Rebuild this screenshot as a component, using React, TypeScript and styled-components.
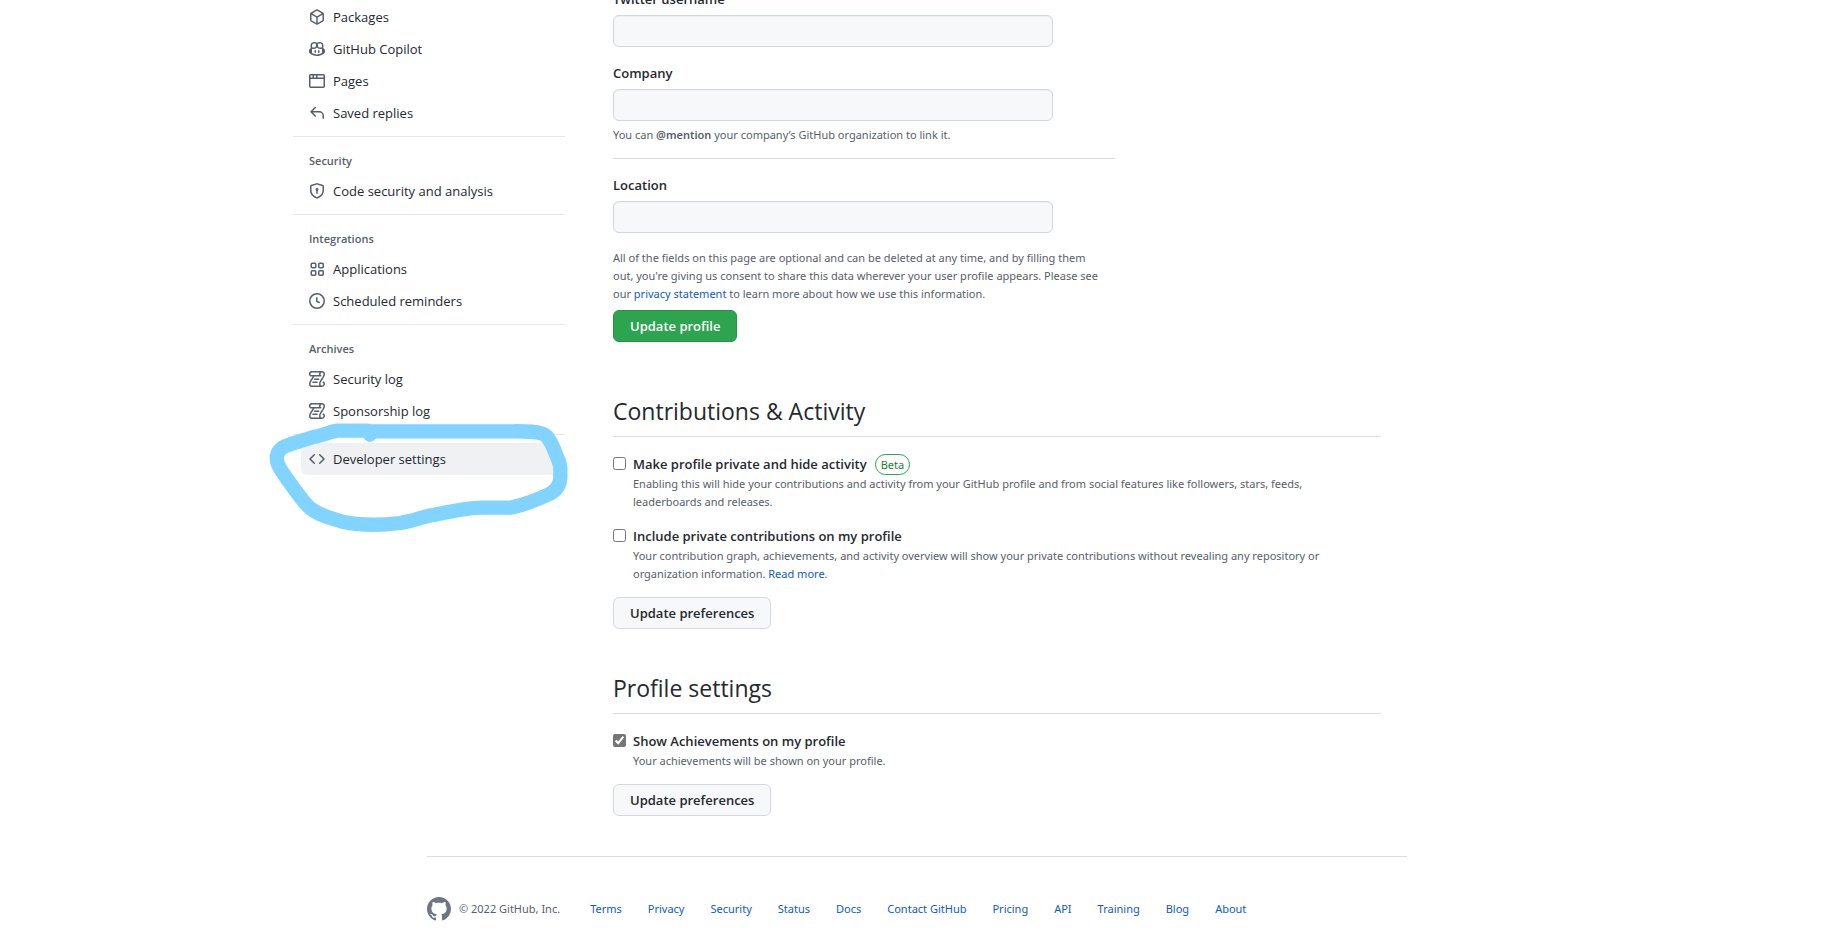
import React from "react";
import styled, { createGlobalStyle } from "styled-components";

const smallFont = `"Noto Sans", "Open Sans", sans-serif`;

const GlobalStyle = createGlobalStyle`
  *, *::before, *::after { box-sizing: border-box; }
  body {
    margin: 0;
    background: #ffffff;
    color: #24292f;
    font-family: "Open Sans", "Noto Sans", sans-serif;
    font-size: 13px;
    line-height: 21px;
    overflow-x: hidden;
  }
`;

const Page = styled.div`
  padding-right: 4px;
`;

const Container = styled.div`
  display: flex;
  align-items: flex-start;
  gap: 48px;
  max-width: 1280px;
  margin: 0 auto;
  padding: 0 16px;
`;

const Sidebar = styled.nav`
  position: relative;
  flex: 0 0 272px;
  padding-top: 1px;
`;

const NavGroup = styled.ul`
  list-style: none;
  margin: 0;
  padding: 0 8px;

  & + & {
    margin-top: 7px;
    padding-top: 8px;
    border-top: 1px solid #e6e9ec;
  }
`;

const NavHeading = styled.li`
  padding: 7px 8px 5px;
  color: #57606a;
  font-size: 11px;
  font-weight: 600;
  line-height: 18px;
`;

const NavLink = styled.a<{ $active?: boolean }>`
  display: flex;
  align-items: center;
  gap: 8px;
  height: 32px;
  padding: 0 8px;
  border-radius: 6px;
  color: #24292f;
  background: ${(p) => (p.$active ? "#eff1f3" : "transparent")};
  text-decoration: none;
`;

const Icon = styled.svg`
  flex: none;
  color: #57606a;
  fill: currentColor;
  fill-rule: evenodd;
`;

const Marker = styled.svg`
  position: absolute;
  left: -33px;
  bottom: -75px;
  width: 340px;
  height: 150px;
  pointer-events: none;
`;

const Main = styled.main`
  flex: 1 1 auto;
  min-width: 0;
  max-width: 768px;
  margin-top: -11px;
`;

const ProfileForm = styled.form`
  max-width: 502px;
`;

const Field = styled.div`
  & + & {
    margin-top: 16px;
  }
`;

const FieldLabel = styled.label`
  display: block;
  margin-bottom: 5px;
  font-weight: 600;
`;

const TextInput = styled.input`
  display: block;
  width: 440px;
  max-width: 100%;
  height: 32px;
  padding: 5px 12px;
  border: 1px solid #d0d7de;
  border-radius: 6px;
  background: #f6f8fa;
  box-shadow: inset 0 1px 0 rgba(208, 215, 222, 0.2);
  font: inherit;
`;

const Note = styled.p`
  margin: 0;
  color: #57606a;
  font-family: ${smallFont};
  font-size: 11px;
  line-height: 18px;

  b {
    font-weight: 600;
  }
`;

const FieldNote = styled(Note)`
  margin-top: 5px;
`;

const Divider = styled.hr`
  height: 1px;
  margin: 14px 0 16px;
  border: 0;
  background: #d8dee4;
`;

const TextLink = styled.a`
  color: #0b5cc4;
  text-decoration: none;
`;

const Button = styled.button<{ $primary?: boolean }>`
  display: block;
  height: 32px;
  padding: 0 16px;
  border: 1px solid ${(p) => (p.$primary ? "#2a914a" : "#d5d9dd")};
  border-radius: 6px;
  background: ${(p) => (p.$primary ? "#2da44e" : "#f6f8fa")};
  color: ${(p) => (p.$primary ? "#ffffff" : "#24292f")};
  font: inherit;
  font-weight: 600;
  line-height: 20px;
  cursor: pointer;
`;

const Consent = styled(Note)`
  max-width: 490px;
  margin: 16px 0 7px;
`;

const Section = styled.section`
  margin-top: 52px;

  & + & {
    margin-top: 42px;
  }

  ${Button} {
    margin-top: 14px;
  }
`;

const SectionTitle = styled.h2`
  margin: 0 0 17px;
  padding-bottom: 8px;
  border-bottom: 1px solid #d8dee4;
  font-size: 23px;
  font-weight: 400;
  line-height: 34px;
`;

const Option = styled.div`
  display: grid;
  grid-template-columns: 13px 1fr;
  column-gap: 7px;

  & + & {
    margin-top: 15px;
  }
`;

const Checkbox = styled.input`
  width: 13px;
  height: 13px;
  margin: 3px 0 0;
  accent-color: #767676;
`;

const OptionLabel = styled.label`
  display: flex;
  align-items: center;
  gap: 8px;
  height: 21px;
  font-weight: 600;
`;

const OptionNote = styled(Note)`
  grid-column: 2;
  max-width: 720px;
`;

const Beta = styled.span`
  height: 21px;
  padding: 0 5px;
  border: 1px solid #2da44e;
  border-radius: 11px;
  color: #1a7f37;
  font-family: ${smallFont};
  font-size: 11px;
  font-weight: 400;
  line-height: 19px;
`;

const Footer = styled.footer`
  max-width: 1012px;
  margin: 40px auto 0;
  padding: 0 16px;

  ${Icon} {
    color: #6e7781;
  }
`;

const FooterRow = styled.div`
  display: flex;
  align-items: center;
  padding-top: 40px;
  border-top: 1px solid #d8dee4;
  color: #57606a;
  font-family: ${smallFont};
  font-size: 11px;
  line-height: 18px;
`;

const Copyright = styled.span`
  margin: 0 30px 0 8px;
`;

const FooterLinks = styled.ul`
  display: flex;
  gap: 26px;
  margin: 0;
  padding: 0;
  list-style: none;
`;

const logPath =
  "M5 8.25a.75.75 0 0 1 .75-.75h4a.75.75 0 0 1 0 1.5h-4A.75.75 0 0 1 5 8.25ZM4 10.5A.75.75 0 0 0 4 12h4a.75.75 0 0 0 0-1.5H4Z M13-.005c1.654 0 3 1.328 3 3 0 .982-.338 1.933-.783 2.818-.443.879-1.028 1.758-1.582 2.588l-.011.017c-.568.853-1.104 1.659-1.501 2.446-.398.789-.623 1.494-.623 2.136a1.5 1.5 0 1 0 2.333-1.248.75.75 0 0 1 .834-1.246A3 3 0 0 1 13 16H3a3 3 0 0 1-3-3c0-1.582.891-3.135 1.777-4.506.209-.322.418-.637.623-.946.473-.709.923-1.386 1.287-2.048H2.51c-.576 0-1.381-.133-1.907-.783A2.68 2.68 0 0 1 0 2.995a3 3 0 0 1 3-3Zm0 1.5a1.5 1.5 0 0 0-1.5 1.5c0 .476.223.834.667 1.132A.75.75 0 0 1 11.75 5.5H5.368c-.467 1.003-1.141 2.015-1.773 2.963-.192.289-.381.571-.558.845C2.13 10.711 1.5 11.916 1.5 13A1.5 1.5 0 0 0 3 14.5h7.401A2.989 2.989 0 0 1 10 13c0-.979.338-1.928.784-2.812.441-.874 1.023-1.748 1.575-2.576l.017-.026c.568-.853 1.103-1.658 1.501-2.448.398-.79.623-1.497.623-2.143 0-.838-.669-1.5-1.5-1.5Zm-10 0a1.5 1.5 0 0 0-1.5 1.5c0 .321.1.569.27.778.097.12.325.227.74.227h7.674A2.737 2.737 0 0 1 10 2.995c0-.546.146-1.059.401-1.5Z";

const icons: Record<string, React.ReactNode> = {
  package: (
    <path d="M8.878.392a1.75 1.75 0 00-1.756 0l-5.25 3.045A1.75 1.75 0 001 4.951v6.098c0 .624.332 1.2.872 1.514l5.25 3.045a1.75 1.75 0 001.756 0l5.25-3.045c.54-.313.872-.89.872-1.514V4.951c0-.624-.332-1.2-.872-1.514L8.878.392zM7.875 1.69a.25.25 0 01.25 0l4.63 2.685L8 7.133 3.245 4.375l4.63-2.685zM2.5 5.677v5.372c0 .09.047.171.125.216l4.625 2.683V8.432L2.5 5.677zm6.25 8.271l4.625-2.683a.25.25 0 00.125-.216V5.677L8.75 8.432v5.516z" />
  ),
  copilot: (
    <path d="M7.998 15.035c-4.562 0-7.873-2.914-7.998-3.749V9.338c.085-.628.677-1.686 1.588-2.065.013-.07.024-.143.036-.218.029-.183.06-.384.126-.612-.201-.508-.254-1.084-.254-1.656 0-.87.128-1.769.693-2.484.579-.733 1.494-1.124 2.724-1.261 1.206-.134 2.262.034 2.944.765.05.053.096.108.139.165.044-.057.094-.112.143-.165.682-.731 1.738-.899 2.944-.765 1.23.137 2.145.528 2.724 1.261.566.715.693 1.614.693 2.484 0 .572-.053 1.148-.254 1.656.066.228.098.429.126.612.012.076.024.148.037.218.924.385 1.522 1.471 1.591 2.095v1.872c0 .766-3.351 3.795-8.002 3.795Zm0-1.485c2.28 0 4.584-1.11 5.002-1.433V7.862l-.023-.116c-.49.21-1.075.291-1.727.291-1.146 0-2.059-.327-2.71-.991A3.222 3.222 0 0 1 8 6.303a3.24 3.24 0 0 1-.544.743c-.65.664-1.563.991-2.71.991-.652 0-1.236-.081-1.727-.291l-.023.116v4.255c.419.323 2.722 1.433 5.002 1.433ZM6.762 2.83c-.193-.206-.637-.413-1.682-.297-1.019.113-1.479.404-1.713.7-.247.312-.369.789-.369 1.554 0 .793.129 1.171.308 1.371.162.181.519.379 1.442.379.853 0 1.339-.235 1.638-.54.315-.322.527-.827.617-1.553.117-.935-.037-1.395-.241-1.614Zm4.155-.297c-1.044-.116-1.488.091-1.681.297-.204.219-.359.679-.242 1.614.091.726.303 1.231.618 1.553.299.305.784.54 1.638.54.922 0 1.28-.198 1.442-.379.179-.2.308-.578.308-1.371 0-.765-.123-1.242-.37-1.554-.233-.296-.693-.587-1.713-.7ZM6.25 9.037a.75.75 0 0 1 .75.75v1.501a.75.75 0 0 1-1.5 0V9.787a.75.75 0 0 1 .75-.75Zm4.25.75v1.501a.75.75 0 0 1-1.5 0V9.787a.75.75 0 0 1 1.5 0Z" />
  ),
  browser: (
    <path d="M0 2.75C0 1.784.784 1 1.75 1h12.5c.966 0 1.75.784 1.75 1.75v10.5A1.75 1.75 0 0114.25 15H1.75A1.75 1.75 0 010 13.25V2.75zm1.75-.25a.25.25 0 00-.25.25V4.5h2v-2H1.75zM5 2.5v2h2v-2H5zm3.5 0v2h6V2.75a.25.25 0 00-.25-.25H8.5zm6 3.5h-13v7.25c0 .138.112.25.25.25h12.5a.25.25 0 00.25-.25V6z" />
  ),
  reply: (
    <path d="M6.78 1.97a.75.75 0 010 1.06L3.81 6h6.44A4.75 4.75 0 0115 10.75v2.5a.75.75 0 01-1.5 0v-2.5a3.25 3.25 0 00-3.25-3.25H3.81l2.97 2.97a.75.75 0 11-1.06 1.06L1.47 7.28a.75.75 0 010-1.06l4.25-4.25a.75.75 0 011.06 0z" />
  ),
  shield: (
    <path d="M8.533.133a1.75 1.75 0 00-1.066 0l-5.25 1.68A1.75 1.75 0 001 3.48V7c0 1.566.32 3.182 1.303 4.682.983 1.498 2.585 2.813 5.032 3.855a1.7 1.7 0 001.33 0c2.447-1.042 4.049-2.357 5.032-3.855C14.68 10.182 15 8.566 15 7V3.48a1.75 1.75 0 00-1.217-1.667L8.533.133zm-.61 1.429a.25.25 0 01.153 0l5.25 1.68a.25.25 0 01.174.238V7c0 1.358-.275 2.666-1.057 3.86-.784 1.194-2.121 2.34-4.366 3.297a.2.2 0 01-.154 0c-2.245-.956-3.582-2.104-4.366-3.298C2.775 9.666 2.5 8.36 2.5 7V3.48a.25.25 0 01.174-.237l5.25-1.68zM9.5 6.5a1.5 1.5 0 01-.75 1.3v2.45a.75.75 0 01-1.5 0V7.8A1.5 1.5 0 119.5 6.5z" />
  ),
  apps: (
    <g fill="none" stroke="currentColor" strokeWidth="1.5">
      <rect x="2.25" y="2.25" width="4.5" height="4.5" rx="1" />
      <rect x="9.75" y="2.25" width="4.5" height="4.5" rx="1" />
      <rect x="2.25" y="9.75" width="4.5" height="4.5" rx="1" />
      <rect x="9.75" y="9.75" width="4.5" height="4.5" rx="1" />
    </g>
  ),
  clock: (
    <g fill="none" stroke="currentColor" strokeWidth="1.5" strokeLinecap="round" strokeLinejoin="round">
      <circle cx="8" cy="8" r="7.25" />
      <path d="M7.75 4.75v3.5l2.5 1.25" />
    </g>
  ),
  log: <path d={logPath} />,
  code: (
    <path d="M4.72 3.22a.75.75 0 011.06 1.06L2.06 8l3.72 3.72a.75.75 0 11-1.06 1.06L.47 8.53a.75.75 0 010-1.06l4.25-4.25zm6.56 0a.75.75 0 10-1.06 1.06L13.94 8l-3.72 3.72a.75.75 0 101.06 1.06l4.25-4.25a.75.75 0 000-1.06l-4.25-4.25z" />
  ),
  github: (
    <path d="M8 0C3.58 0 0 3.58 0 8c0 3.54 2.29 6.53 5.47 7.59.4.07.55-.17.55-.38 0-.19-.01-.82-.01-1.49-2.01.37-2.53-.49-2.69-.94-.09-.23-.48-.94-.82-1.13-.28-.15-.68-.52-.01-.53.63-.01 1.08.58 1.23.82.72 1.21 1.87.87 2.33.66.07-.52.28-.87.51-1.07-1.78-.2-3.64-.89-3.64-3.95 0-.87.31-1.59.82-2.15-.08-.2-.36-1.02.08-2.12 0 0 .67-.21 2.2.82.64-.18 1.32-.27 2-.27.68 0 1.36.09 2 .27 1.53-1.04 2.2-.82 2.2-.82.44 1.1.16 1.92.08 2.12.51.56.82 1.27.82 2.15 0 3.07-1.87 3.75-3.65 3.95.29.25.54.73.54 1.48 0 1.07-.01 1.93-.01 2.2 0 .21.15.46.55.38A8.013 8.013 0 0016 8c0-4.42-3.58-8-8-8z" />
  ),
};

function Glyph({ name, size = 16 }: { name: string; size?: number }) {
  return (
    <Icon viewBox="0 0 16 16" width={size} height={size} aria-hidden="true">
      {icons[name]}
    </Icon>
  );
}

type NavEntry = { icon: string; text: string; active?: boolean };

const navGroups: { heading?: string; items: NavEntry[] }[] = [
  {
    items: [
      { icon: "package", text: "Packages" },
      { icon: "copilot", text: "GitHub Copilot" },
      { icon: "browser", text: "Pages" },
      { icon: "reply", text: "Saved replies" },
    ],
  },
  { heading: "Security", items: [{ icon: "shield", text: "Code security and analysis" }] },
  {
    heading: "Integrations",
    items: [
      { icon: "apps", text: "Applications" },
      { icon: "clock", text: "Scheduled reminders" },
    ],
  },
  {
    heading: "Archives",
    items: [
      { icon: "log", text: "Security log" },
      { icon: "log", text: "Sponsorship log" },
    ],
  },
  { items: [{ icon: "code", text: "Developer settings", active: true }] },
];

const footerLinks = [
  "Terms",
  "Privacy",
  "Security",
  "Status",
  "Docs",
  "Contact GitHub",
  "Pricing",
  "API",
  "Training",
  "Blog",
  "About",
];

export default function App() {
  return (
    <Page>
      <GlobalStyle />
      <Container>
        <Sidebar aria-label="Settings">
          {navGroups.map((group, i) => (
            <NavGroup key={i}>
              {group.heading && <NavHeading>{group.heading}</NavHeading>}
              {group.items.map((item) => (
                <li key={item.text}>
                  <NavLink href="#" $active={item.active}>
                    <Glyph name={item.icon} />
                    {item.text}
                  </NavLink>
                </li>
              ))}
            </NavGroup>
          ))}
          <Marker viewBox="0 0 1020 450" aria-hidden="true">
            <path
              d="M330 104 C332 98 330 92 322 92 L232 92 C205 96 190 106 160 111 C120 124 95 130 75 139 C52 150 46 170 53 190 C62 215 85 240 100 263 C120 290 132 308 150 324 C175 345 215 356 250 366 C300 376 365 376 420 369 C460 363 485 350 525 344 C580 334 610 324 665 323 L752 323 C790 315 835 298 870 281 C890 270 900 255 901 232 L901 205 C901 185 889 170 883 150 C873 128 864 105 845 100 C815 92 780 94 740 94 L330 94"
              fill="none"
              stroke="#80d4ff"
              strokeWidth="43"
              strokeLinecap="round"
              strokeLinejoin="round"
            />
          </Marker>
        </Sidebar>

        <Main>
          <ProfileForm onSubmit={(e) => e.preventDefault()}>
            <Field>
              <FieldLabel htmlFor="twitter">Twitter username</FieldLabel>
              <TextInput id="twitter" type="text" />
            </Field>
            <Field>
              <FieldLabel htmlFor="company">Company</FieldLabel>
              <TextInput id="company" type="text" />
              <FieldNote>
                You can <b>@mention</b> your company’s GitHub organization to link it.
              </FieldNote>
            </Field>
            <Divider />
            <Field>
              <FieldLabel htmlFor="location">Location</FieldLabel>
              <TextInput id="location" type="text" />
            </Field>
            <Consent>
              All of the fields on this page are optional and can be deleted at any time, and by filling them out,
              you're giving us consent to share this data wherever your user profile appears. Please see
              our <TextLink href="#">privacy statement</TextLink> to learn more about how we use this information.
            </Consent>
            <Button $primary type="submit">
              Update profile
            </Button>
          </ProfileForm>

          <Section>
            <SectionTitle>Contributions &amp; Activity</SectionTitle>
            <Option>
              <Checkbox type="checkbox" id="private-profile" />
              <OptionLabel htmlFor="private-profile">
                Make profile private and hide activity <Beta>Beta</Beta>
              </OptionLabel>
              <OptionNote>
                Enabling this will hide your contributions and activity from your GitHub profile and from social
                features like followers, stars, feeds, leaderboards and releases.
              </OptionNote>
            </Option>
            <Option>
              <Checkbox type="checkbox" id="private-contributions" />
              <OptionLabel htmlFor="private-contributions">Include private contributions on my profile</OptionLabel>
              <OptionNote>
                Your contribution graph, achievements, and activity overview will show your private contributions
                without revealing any repository or organization information. <TextLink href="#">Read more</TextLink>.
              </OptionNote>
            </Option>
            <Button type="button">Update preferences</Button>
          </Section>

          <Section>
            <SectionTitle>Profile settings</SectionTitle>
            <Option>
              <Checkbox type="checkbox" id="achievements" defaultChecked />
              <OptionLabel htmlFor="achievements">Show Achievements on my profile</OptionLabel>
              <OptionNote>Your achievements will be shown on your profile.</OptionNote>
            </Option>
            <Button type="button">Update preferences</Button>
          </Section>
        </Main>
      </Container>

      <Footer>
        <FooterRow>
          <Glyph name="github" size={24} />
          <Copyright>© 2022 GitHub, Inc.</Copyright>
          <FooterLinks>
            {footerLinks.map((text) => (
              <li key={text}>
                <TextLink href="#">{text}</TextLink>
              </li>
            ))}
          </FooterLinks>
        </FooterRow>
      </Footer>
    </Page>
  );
}
